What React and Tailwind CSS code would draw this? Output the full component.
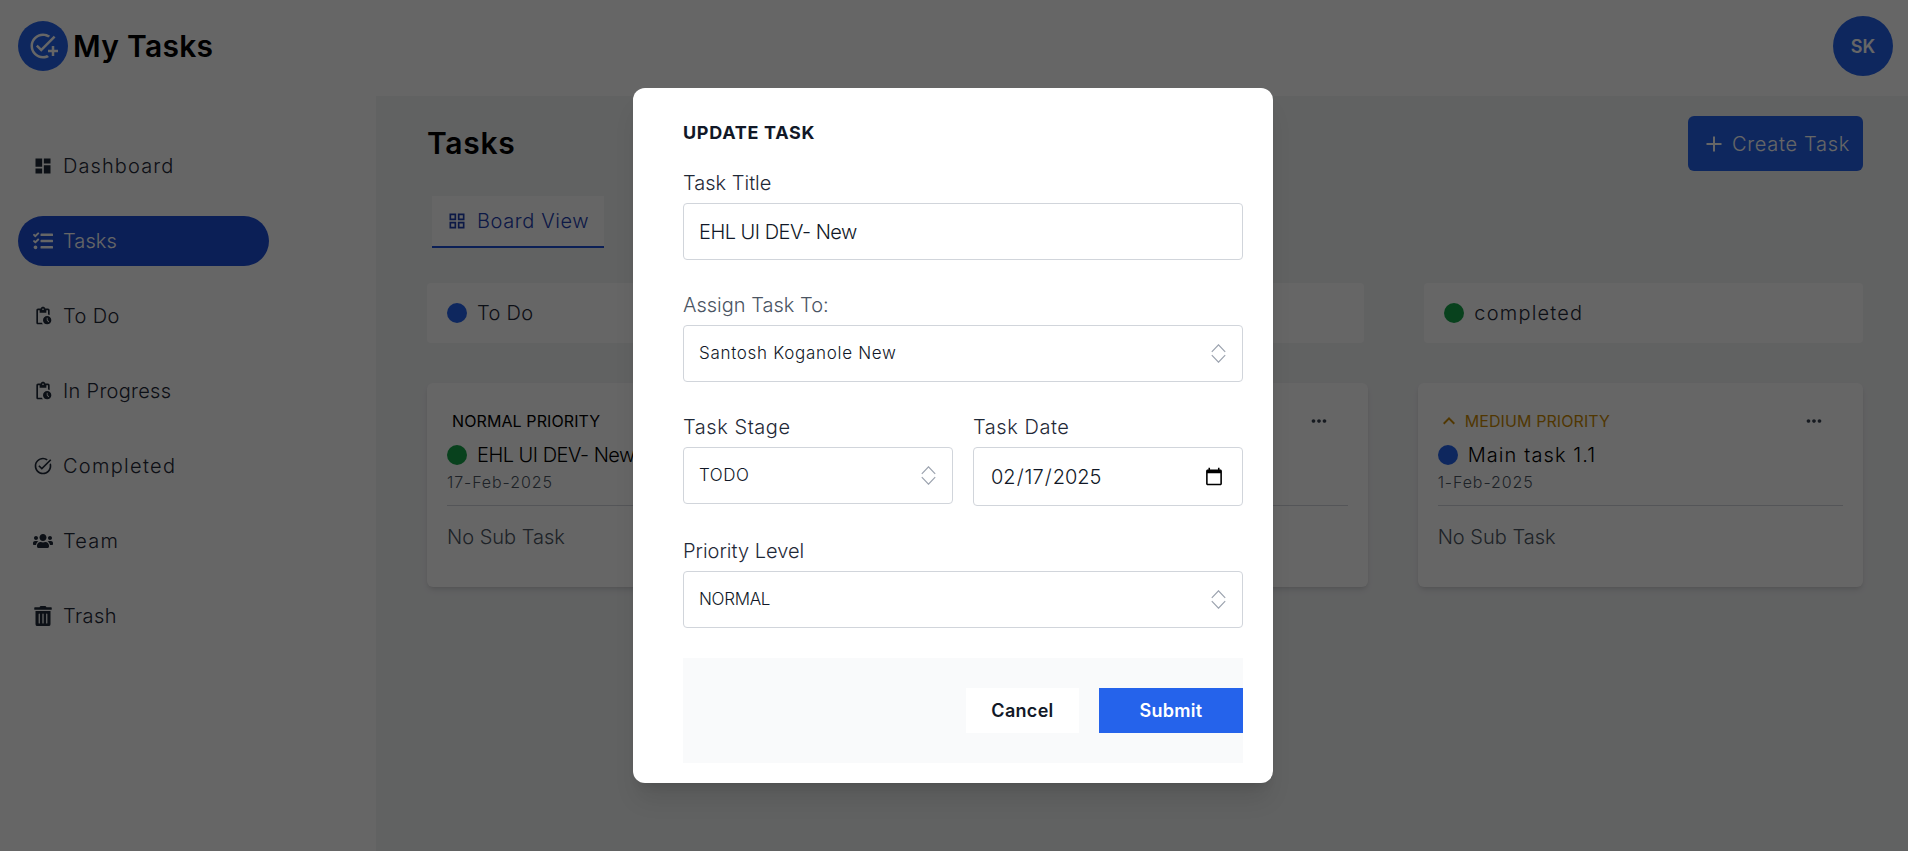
import { MdDashboard, MdOutlinePendingActions, MdTaskAlt, MdGridView, MdAddTask, MdKeyboardArrowUp, MdMoreHoriz } from 'react-icons/md'
import { FaTasks, FaUsers, FaTrashAlt } from 'react-icons/fa'
import { IoMdAdd } from 'react-icons/io'

// ── Data ──────────────────────────────────────────────────────────────────────

const navItems = [
  { label: 'Dashboard', Icon: MdDashboard, track: 'tracking-[1.1px]' },
  { label: 'Tasks', Icon: FaTasks, active: true, track: 'tracking-[0.1px]' },
  { label: 'To Do', Icon: MdOutlinePendingActions, track: 'tracking-[0.4px]' },
  { label: 'In Progress', Icon: MdOutlinePendingActions, track: 'tracking-[0.3px]' },
  { label: 'Completed', Icon: MdTaskAlt, track: 'tracking-[1.3px]' },
  { label: 'Team', Icon: FaUsers, track: 'tracking-[1.2px]' },
  { label: 'Trash', Icon: FaTrashAlt, track: 'tracking-[0.4px]' },
]

// ── Page pieces ───────────────────────────────────────────────────────────────

function NavItem({ label, Icon, active, track }) {
  return (
    <a
      className={
        active
          ? 'flex h-[50px] items-center gap-[10px] rounded-full bg-[#1d4ed8] pl-[15px] text-white'
          : 'flex h-[50px] items-center gap-[10px] rounded-full pl-[15px] text-[#1f2937]'
      }
    >
      <span className="flex w-5 justify-center"><Icon size={20} /></span>
      <span className={`text-[20px] font-light ${track}`}>{label}</span>
    </a>
  )
}

function ColumnHeader({ label, dot, track }) {
  return (
    <div className="flex h-[60px] items-center gap-[10px] rounded bg-white pl-5">
      <span className={`h-5 w-5 rounded-full ${dot}`} />
      <span className={`text-[20px] font-light text-[#1f2937] ${track}`}>{label}</span>
    </div>
  )
}

function TaskCard({ priority, priorityClass, showArrow, title, titleTrack, date, dot, dateTrack }) {
  return (
    <div className="h-[204px] rounded-md bg-white px-5 pt-7 shadow-md">
      <div className="flex h-5 items-center justify-between pr-[18px]">
        <div className={`flex items-center gap-1 pl-[5px] ${priorityClass}`}>
          {showArrow && <MdKeyboardArrowUp size={24} className="-ml-[6px]" />}
          {priority && <span className="text-[16px] font-normal tracking-[0.1px]">{priority}</span>}
        </div>
        <MdMoreHoriz size={22} className="text-[#374151]" />
      </div>
      <div className="mt-[14px] flex h-5 items-center gap-[10px]">
        {dot && <span className={`h-5 w-5 rounded-full ${dot}`} />}
        {title && <span className={`whitespace-nowrap text-[20px] font-light text-black ${titleTrack}`}>{title}</span>}
      </div>
      <p className={`mt-[5px] h-6 text-[16px] leading-6 font-light text-[#4b5563] ${dateTrack}`}>{date}</p>
      <div className="mt-[11px] border-t border-[#d1d5db]" />
      {title && <p className="mt-[17px] text-[20px] leading-7 font-light text-[#4b5563]">No Sub Task</p>}
    </div>
  )
}

// ── Modal pieces ──────────────────────────────────────────────────────────────

function Label({ children, className = 'text-[#1f2937]' }) {
  return <p className={`h-[30px] text-[20px] leading-[30px] font-light ${className}`}>{children}</p>
}

function ExpandIcon() {
  return (
    <svg width="15" height="19" viewBox="0 0 15 19" fill="none" stroke="#9ca3af" strokeWidth="1.2">
      <path d="M0.8 7.8 L7.5 0.8 L14.2 7.8" />
      <path d="M0.8 11.2 L7.5 18.2 L14.2 11.2" />
    </svg>
  )
}

function SelectBox({ value, track }) {
  return (
    <button className="mt-[5px] flex h-[57px] w-full items-center justify-between rounded border border-[#d1d5db] bg-white pr-4 pl-[15px] text-left">
      <span className={`text-[17px] font-light text-[#111827] ${track}`}>{value}</span>
      <ExpandIcon />
    </button>
  )
}

export default function App() {
  return (
    <div className="relative h-screen w-full overflow-hidden bg-white font-['Inter',sans-serif]">
      <header className="flex h-[96px] items-center justify-between pr-[15px] pb-1 pl-[18px]">
        <div className="flex items-center gap-[5px]">
          <span className="flex h-[50px] w-[50px] items-center justify-center rounded-full bg-[#2563eb] text-white">
            <MdAddTask size={30} />
          </span>
          <span className="text-[30px] font-semibold tracking-[0.3px] text-black">My Tasks</span>
        </div>
        <span className="flex h-[60px] w-[60px] items-center justify-center rounded-full bg-[#2563eb] text-[18px] font-semibold text-white">SK</span>
      </header>

      <div className="flex h-[755px]">
        <aside className="flex w-[376px] shrink-0 flex-col px-[18px] pt-[45px]">
          <div className="flex w-[251px] flex-col gap-[25px]">
            {navItems.map((item) => <NavItem key={item.label} {...item} />)}
          </div>
        </aside>

        <main className="flex-1 bg-[#f3f4f6] pt-5 pr-[45px] pl-[51px]">
          <div className="flex h-[55px] items-center justify-between">
            <h1 className="text-[30px] font-semibold tracking-[0.7px] text-black">Tasks</h1>
            <button className="flex h-[55px] w-[175px] items-center gap-[6px] rounded-md bg-[#2563eb] pl-[14px] text-white">
              <IoMdAdd size={24} />
              <span className="whitespace-nowrap text-[20px] font-light tracking-[0.7px]">Create Task</span>
            </button>
          </div>

          <div className="mt-[25px] ml-[5px] flex h-[52px] w-[172px] items-center gap-[10px] border-b-2 border-[#1d4ed8] bg-white pl-[15px] text-[#1e40af]">
            <MdGridView size={20} />
            <span className="whitespace-nowrap text-[20px] font-light tracking-[0.6px]">Board View</span>
          </div>

          <div className="mt-[35px] grid grid-cols-3 gap-[60px]">
            <ColumnHeader label="To Do" dot="bg-[#2563eb]" track="tracking-[0.3px]" />
            <ColumnHeader label="In Progress" dot="bg-[#ca8a04]" track="tracking-[0.3px]" />
            <ColumnHeader label="completed" dot="bg-[#16a34a]" track="tracking-[1.2px]" />
          </div>

          <div className="mt-10 grid grid-cols-3 gap-[50px]">
            <TaskCard priority="NORMAL PRIORITY" priorityClass="text-black" title="EHL UI DEV- New" titleTrack="tracking-[-0.5px]" date="17-Feb-2025" dot="bg-[#16a34a]" dateTrack="tracking-[0.9px]" />
            <TaskCard />
            <TaskCard priority="MEDIUM PRIORITY" priorityClass="text-[#ca8a04]" showArrow title="Main task 1.1" titleTrack="tracking-[1.1px]" date="1-Feb-2025" dot="bg-[#2563eb]" dateTrack="tracking-[0.9px]" />
          </div>
        </main>
      </div>

      {/* Backdrop + dialog */}
      <div className="absolute inset-0 flex justify-center bg-black/60 pt-[88px] pr-[2px]">
        <div className="h-[695px] w-[640px] rounded-xl bg-white pt-[30px] pr-[30px] pl-[50px] shadow-xl">
          <h2 className="h-[30px] text-[18px] leading-[30px] font-bold tracking-[0.7px] text-[#111827]">UPDATE TASK</h2>

          <div className="mt-5">
            <Label>Task Title</Label>
            <input
              defaultValue="EHL UI DEV- New"
              className="mt-[5px] h-[57px] w-full rounded border border-[#d1d5db] px-[15px] text-[20px] font-light tracking-[-0.5px] text-[#111827] outline-none"
            />
          </div>

          <div className="mt-[30px]">
            <Label className="text-[#4b5563]">Assign Task To:</Label>
            <SelectBox value="Santosh Koganole New" track="tracking-[0.7px]" />
          </div>

          <div className="mt-[30px] flex gap-5">
            <div className="flex-1">
              <Label className="text-[#1f2937] tracking-[0.55px]">Task Stage</Label>
              <SelectBox value="TODO" track="tracking-[0.5px]" />
            </div>
            <div className="flex-1">
              <Label className="text-[#1f2937] tracking-[0.55px]">Task Date</Label>
              <input
                type="date"
                defaultValue="2025-02-17"
                className="mt-[5px] h-[59px] w-full rounded border border-[#d1d5db] px-4 text-[20px] font-light text-[#111827] outline-none"
              />
            </div>
          </div>

          <div className="mt-[30px]">
            <Label>Priority Level</Label>
            <SelectBox value="NORMAL" track="tracking-[-0.3px]" />
          </div>

          <div className="mt-[30px] flex h-[105px] items-center justify-end gap-5 bg-[#f9fafb]">
            <button className="h-[45px] w-[113px] bg-white text-[18px] font-semibold tracking-[0.3px] text-[#111827]">Cancel</button>
            <button className="h-[45px] w-[144px] bg-[#2563eb] text-[18px] font-semibold tracking-[0.3px] text-white">Submit</button>
          </div>
        </div>
      </div>
    </div>
  )
}
